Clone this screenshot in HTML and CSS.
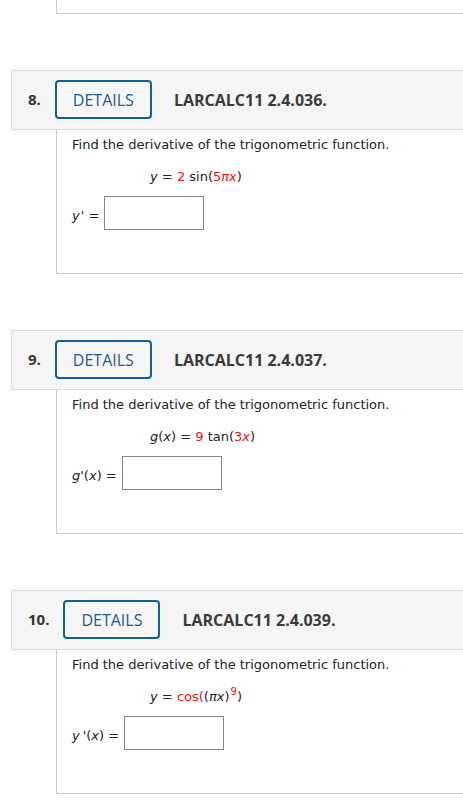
FILE: index.html
```html
<!DOCTYPE html>
<html lang="en">
<head>
<meta charset="utf-8">
<title>Questions</title>
<link rel="stylesheet" href="styles.css">
</head>
<body>
<div class="page">
  <div class="prev-box"></div>

  <section class="question">
    <div class="q-header">
      <span class="q-num">8.</span>
      <button class="details-btn" type="button">DETAILS</button>
      <span class="q-title">LARCALC11 2.4.036.</span>
    </div>
    <div class="q-body">
      <p class="prompt">Find the derivative of the trigonometric function.</p>
      <div class="equation"><i>y</i> = <span class="red">2</span> sin(<span class="red">5<i>πx</i></span>)</div>
      <div class="answer">
        <span class="label"><i>y</i><span class="prime prime-tight">'</span> =</span>
        <span class="input-box"></span>
      </div>
    </div>
  </section>

  <section class="question">
    <div class="q-header">
      <span class="q-num">9.</span>
      <button class="details-btn" type="button">DETAILS</button>
      <span class="q-title">LARCALC11 2.4.037.</span>
    </div>
    <div class="q-body">
      <p class="prompt">Find the derivative of the trigonometric function.</p>
      <div class="equation"><i>g</i>(<i>x</i>) = <span class="red">9</span> tan(<span class="red">3<i>x</i></span>)</div>
      <div class="answer">
        <span class="label"><i>g</i>'(<i>x</i>) =</span>
        <span class="input-box"></span>
      </div>
    </div>
  </section>

  <section class="question">
    <div class="q-header">
      <span class="q-num">10.</span>
      <button class="details-btn" type="button">DETAILS</button>
      <span class="q-title">LARCALC11 2.4.039.</span>
    </div>
    <div class="q-body">
      <p class="prompt">Find the derivative of the trigonometric function.</p>
      <div class="equation"><i>y</i> = <span class="red">cos(</span>(<i>πx</i>)<sup class="red">9</sup>)</div>
      <div class="answer">
        <span class="label"><i>y</i><span class="prime">'</span>(<i>x</i>) =</span>
        <span class="input-box"></span>
      </div>
    </div>
  </section>
</div>
</body>
</html>
```
FILE: styles.css
```css
html, body {
  margin: 0;
  padding: 0;
  overflow: hidden;
  background: #ffffff;
}

.page {
  width: 560px;
  font-family: "DejaVu Sans", Verdana, sans-serif;
  color: #222222;
}

.prev-box {
  margin-left: 56px;
  height: 13px;
  border-left: 1px solid #cccccc;
  border-bottom: 1px solid #cccccc;
}

.question {
  margin-top: 56px;
}

.q-header {
  margin-left: 11px;
  display: flex;
  align-items: flex-start;
  padding: 9px 0 10px 16px;
  background: #f5f5f5;
  border: 1px solid #dddddd;
  font-family: "Open Sans", sans-serif;
}

.q-num {
  font-size: 15px;
  font-weight: 700;
  color: #333333;
  line-height: 20px;
  margin-top: 9px;
}

.details-btn {
  margin-left: 14px;
  height: 39px;
  padding: 0 16px;
  border: 2px solid #0e6196;
  border-radius: 4px;
  background: transparent;
  font-family: "Open Sans", sans-serif;
  font-size: 16px;
  color: #1f5b8b;
  line-height: 20px;
}

.q-title {
  margin-left: 22px;
  font-size: 16px;
  font-weight: 700;
  color: #3a3a3a;
  line-height: 20px;
  margin-top: 10px;
}

.q-body {
  margin-left: 56px;
  border-left: 1px solid #cccccc;
  border-bottom: 1px solid #cccccc;
  padding: 5px 0 43px 15px;
  font-size: 13px;
}

.prompt {
  margin: 0;
  line-height: 20px;
}

.equation {
  margin-top: 12px;
  padding-left: 78px;
  line-height: 20px;
}

.equation sup {
  font-size: 10px;
  line-height: 0;
  vertical-align: 6px;
  margin-left: 1px;
}

.red {
  color: #f01010;
}

.answer {
  margin-top: 9px;
  display: flex;
  align-items: flex-end;
}

.label {
  line-height: 20px;
  margin-bottom: 4px;
  margin-right: 5px;
}

.prime {
  margin-left: 3px;
}

.prime-tight {
  margin-left: 1px;
}

.input-box {
  display: block;
  width: 98px;
  height: 32px;
  border: 1px solid #858585;
  background: #ffffff;
}
```
